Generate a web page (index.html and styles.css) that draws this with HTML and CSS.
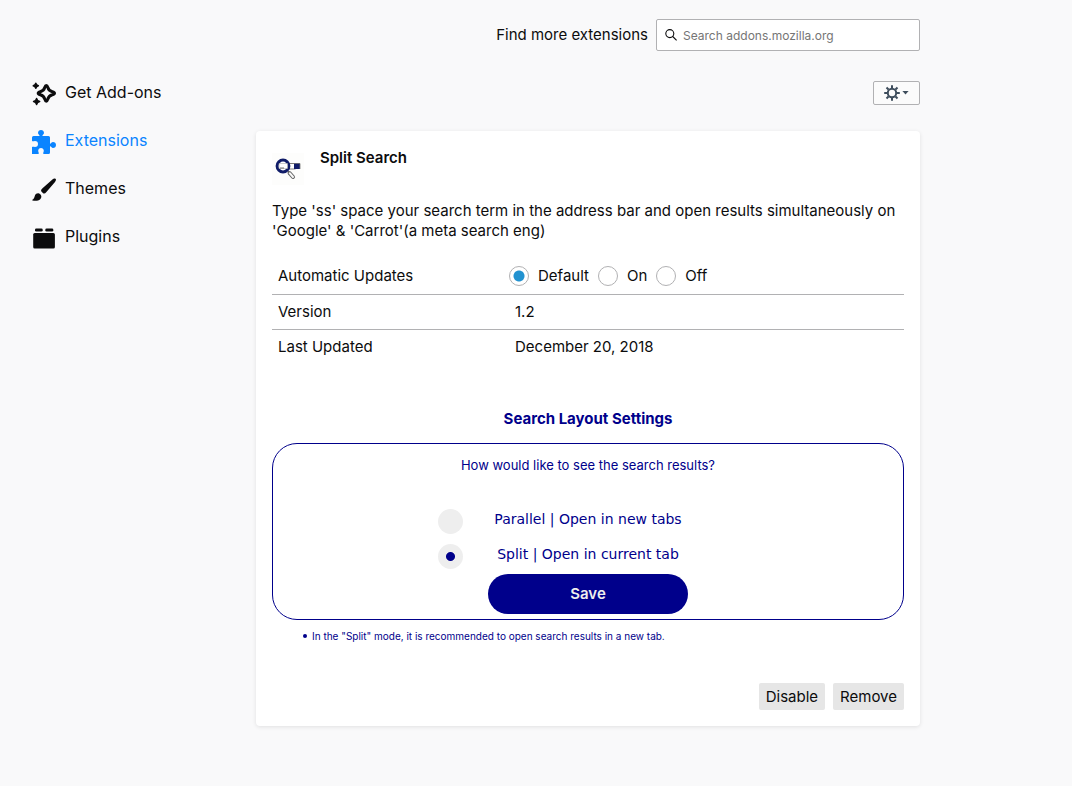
FILE: index.html
```html
<!DOCTYPE html>
<html lang="en">
<head>
<meta charset="utf-8">
<meta name="viewport" content="width=device-width, initial-scale=1">
<title>Add-ons Manager</title>
<link rel="stylesheet" href="styles.css">
</head>
<body>
<div class="page">
  <nav class="sidebar">
    <a class="category" href="#discover">
      <svg class="category-icon" viewBox="0 0 24 24" aria-hidden="true">
        <path d="M14.300 3.400C15.200 3.400 15.400 4 15.700 5.100C16.400 7.700 17.700 9 20.300 9.700C21.800 10.100 22.500 10.400 22.500 11.200S21.800 12.300 20.300 12.700C17.700 13.400 16.400 14.700 15.700 17.300C15.400 18.400 15.200 19.200 14.300 19.200S13.200 18.400 12.900 17.300C12.200 14.700 10.900 13.400 8.300 12.700C6.800 12.300 6.200 12 6.200 11.200S6.800 10.100 8.300 9.700C10.900 9 12.200 7.700 12.900 5.100C13.200 4 13.400 3.400 14.300 3.400Z" fill="none" stroke="currentColor" stroke-width="3" stroke-linejoin="round"/>
        <path d="M3.800 1.200Q4.300 3.300 6.400 3.800Q4.300 4.300 3.800 6.400Q3.300 4.300 1.200 3.800Q3.300 3.300 3.800 1.200ZM4.600 16.500Q5.200 19 7.700 19.500Q5.200 20 4.600 22.500Q4 20 1.500 19.500Q4 19 4.600 16.500Z" fill="currentColor" stroke="currentColor" stroke-width="1.400" stroke-linejoin="round"/>
      </svg>
      <span>Get Add-ons</span>
    </a>
    <a class="category category-selected" href="#extensions">
      <svg class="category-icon" viewBox="0 0 24 24" aria-hidden="true">
        <path fill="currentColor" d="M0 24V17C1 16.500 1.700 17 3 17C5 17 6 16 6 14S5 11 3 11C1.700 11 1 11.600 0 11.100V7.500Q0 6 1.500 6H7.500C8.200 5.200 6 4.500 6 2.900C6 1.100 7.300 0 9 0S12 1.100 12 2.900C12 4.500 9.800 5.200 10.500 6H16.500Q18 6 18 7.500V13.500C18.800 14.200 19.300 12 21 12C22.800 12 24 13.200 24 15S22.800 18 21 18C19.300 18 18.800 15.800 18 16.500V22.500Q18 24 16.500 24H11.500C10.700 22.800 11.800 22.300 11.800 20.800C11.800 19.100 10.600 18 9 18S6.200 19.100 6.200 20.800C6.200 22.300 7.300 22.800 6.500 24Z"/>
      </svg>
      <span>Extensions</span>
    </a>
    <a class="category" href="#themes">
      <svg class="category-icon" viewBox="0 0 24 24" aria-hidden="true">
        <path fill="currentColor" d="M23.500 .8C22.600 0 21.400 .5 20.700 1.200L10.500 10.300C9 11.700 8.800 12.600 9.400 13.500L11.100 15.200C12.100 16 13.200 15.500 14.200 14.300L23 3.900C23.800 2.900 24.500 1.700 23.500 .8ZM7 15.400C4.500 15 3.200 16.500 2.700 18.200C2.200 20 1.500 21.100 .4 21.700C.1 21.900 .2 22.300 .5 22.400C3 23.300 6.500 22.900 8.200 21.300C9.500 20 9.700 18.200 8.800 16.900C8.400 16.100 7.800 15.600 7 15.400Z"/>
      </svg>
      <span>Themes</span>
    </a>
    <a class="category" href="#plugins">
      <svg class="category-icon" viewBox="0 0 24 24" aria-hidden="true">
        <g fill="currentColor"><rect x="1.200" y="7" width="21.700" height="15.500" rx="1.500"/><rect x="3" y="2.500" width="7.700" height="3" rx="1.300"/><rect x="13.300" y="2.500" width="8" height="3" rx="1.300"/></g>
      </svg>
      <span>Plugins</span>
    </a>
  </nav>
  <main class="main">
    <form class="search">
      <label for="addon-search">Find more extensions</label>
      <div class="search-box">
        <svg class="search-icon" viewBox="0 0 12 12" aria-hidden="true"><g fill="none" stroke="#0c0c0d" stroke-width="1.100"><circle cx="4.800" cy="4.600" r="4"/><path d="M7.700 7.500L11.600 11.400"/></g></svg>
        <input id="addon-search" class="search-input" type="text" placeholder="Search addons.mozilla.org">
      </div>
    </form>
    <div class="toolbar">
      <button class="tools" type="button" aria-label="Tools for all add-ons">
        <svg class="gear" viewBox="0 0 16 16" aria-hidden="true"><g fill="none" stroke="#3e4d5c"><circle cx="8" cy="8" r="4.200" stroke-width="2"/><path stroke-width="2" d="M8 .2V3M8 13V15.800M.2 8H3M13 8H15.800M2.500 2.500L4.500 4.500M11.500 11.500L13.500 13.500M2.500 13.500L4.500 11.500M11.500 4.500L13.500 2.500"/></g></svg>
        <svg class="caret" viewBox="0 0 7 4" aria-hidden="true"><path fill="#3e4d5c" d="M.4 0H6.600L3.500 3.600Z"/></svg>
      </button>
    </div>
    <article class="card">
      <header class="card-header">
        <svg class="addon-icon" viewBox="0 0 32 32" aria-hidden="true">
          <rect width="32" height="32" fill="#fdfdfc"/>
          <rect x="17" y="10.500" width="6" height="5.500" fill="#fff" stroke="#858585"/>
          <path fill="#101c68" d="M22 10H28V16H22Z"/><path d="M28 10.500V16M18 10.500H28" stroke="#777" stroke-width=".8"/>
          <circle cx="11" cy="13" r="5.900" fill="#fff" stroke="#101c68" stroke-width="3"/>
          <path d="M7 10.500H15.500V15.500H7Z" fill="#fff" stroke="#aaa" stroke-width=".6"/><path d="M8 15H12" stroke="#555" stroke-width=".8"/>
          <path d="M16 18L18 20" stroke="#555"/><path d="M17.500 20L21 24" stroke="#666" stroke-width="4" stroke-linecap="round"/><path d="M17.700 20.200L21 24" stroke="#f8f8f8" stroke-width="2" stroke-linecap="round"/>
        </svg>
        <h1 class="addon-name">Split Search</h1>
      </header>
      <p class="description">Type 'ss' space your search term in the address bar and open results simultaneously on 'Google' &amp; 'Carrot'(a meta search eng)</p>
      <table class="details">
        <tr>
          <th scope="row" id="updates-label">Automatic Updates</th>
          <td class="updates-cell">
            <div class="updates" role="radiogroup" aria-labelledby="updates-label">
              <label class="update-option"><input class="radio" type="radio" name="updates" checked>Default</label>
              <label class="update-option"><input class="radio" type="radio" name="updates">On</label>
              <label class="update-option"><input class="radio" type="radio" name="updates">Off</label>
            </div>
          </td>
        </tr>
        <tr><th scope="row">Version</th><td>1.2</td></tr>
        <tr><th scope="row">Last Updated</th><td>December 20, 2018</td></tr>
      </table>
      <form class="settings">
        <h2 class="settings-title">Search Layout Settings</h2>
        <div class="settings-box">
          <p class="question">How would like to see the search results?</p>
          <label class="layout-option"><input class="layout-radio" type="radio" name="layout"><span class="layout-text">Parallel | Open in new tabs</span></label>
          <label class="layout-option"><input class="layout-radio" type="radio" name="layout" checked><span class="layout-text">Split | Open in current tab</span></label>
          <button class="save" type="button">Save</button>
        </div>
        <ul class="notes"><li class="note">In the "Split" mode, it is recommended to open search results in a new tab.</li></ul>
      </form>
      <footer class="actions">
        <button class="action" type="button">Disable</button>
        <button class="action" type="button">Remove</button>
      </footer>
    </article>
  </main>
</div>
</body>
</html>
```

FILE: styles.css
```css
* {
  box-sizing: border-box;
}

body {
  margin: 0;
  background: #f9f9fa;
  color: #0c0c0d;
  font: 15px/20px Inter, "Liberation Sans", sans-serif;
}

h1, h2, p, ul {
  margin: 0;
}

button, input {
  font: inherit;
  color: inherit;
}

.page {
  display: flex;
  min-height: 100vh;
}

.sidebar {
  display: flex;
  flex-direction: column;
  flex: 0 0 256px;
  padding: 70px 0 0 32px;
}

.category {
  display: flex;
  align-items: flex-start;
  gap: 9px;
  height: 48px;
  padding-top: 12px;
  color: inherit;
  font-size: 16px;
  text-decoration: none;
}

.category-selected {
  color: #0a84ff;
}

.category-icon {
  width: 24px;
  height: 24px;
}

.main {
  flex: 1;
  max-width: 664px;
  padding: 19px 0 60px;
}

.search {
  display: flex;
  justify-content: flex-end;
  align-items: center;
  gap: 8px;
}

.search-box {
  display: flex;
  align-items: center;
  gap: 6px;
  width: 264px;
  height: 32px;
  padding: 0 8px;
  border: 1px solid #b1b1b3;
  border-radius: 2px;
  background: #fff;
}

.search-icon {
  flex: none;
  width: 12px;
  height: 12px;
}

.search-input {
  flex: 1;
  min-width: 0;
  padding: 2px 0 0;
  border: 0;
  outline: 0;
  background: transparent;
  font-size: 12px;
}

.search-input::placeholder {
  color: #757575;
  opacity: 1;
}

.toolbar {
  display: flex;
  justify-content: flex-end;
  margin: 30px 0 26px;
}

.tools {
  display: flex;
  align-items: center;
  justify-content: center;
  gap: 2px;
  width: 47px;
  height: 24px;
  padding: 0;
  border: 1px solid #b1b1b3;
  border-radius: 2px;
  background: #fbfbfb;
}

.gear {
  width: 16px;
  height: 16px;
}

.caret {
  width: 7px;
  height: 4px;
}

.card {
  padding: 16px;
  border-radius: 4px;
  background: #fff;
  box-shadow: 0 1px 4px rgba(12, 12, 13, 0.1);
}

.card-header {
  display: flex;
  align-items: flex-end;
  gap: 16px;
  height: 38px;
}

.addon-icon {
  width: 32px;
  height: 32px;
}

.addon-name {
  align-self: flex-start;
  font-size: 15px;
  font-weight: 600;
  line-height: 22px;
}

.description {
  margin: 16px 0;
}

.details {
  width: 100%;
  border-collapse: collapse;
  table-layout: fixed;
}

.details th,
.details td {
  height: 35px;
  padding: 0 6px;
  text-align: left;
  font-weight: 400;
}

.details th {
  width: 37.5%;
}

.details tr + tr {
  border-top: 1px solid #b1b1b3;
}

.details tr:first-child th {
  padding-top: 2px;
}

.details .updates-cell {
  height: 37px;
  padding: 2px 0 0;
}

.updates {
  display: flex;
  gap: 9px;
}

.update-option {
  display: flex;
  align-items: center;
  gap: 9px;
}

.radio {
  appearance: none;
  width: 20px;
  height: 20px;
  margin: 0;
  border: 1px solid #b1b1b3;
  border-radius: 50%;
  background: #fff;
}

.radio:checked {
  background: radial-gradient(circle, #2292d0 5px, #fff 6px);
}

.settings {
  margin-top: 45px;
  color: #00008b;
}

.settings-title {
  font-size: 15px;
  font-weight: 700;
  line-height: 20px;
  text-align: center;
}

.settings-box {
  display: flex;
  flex-direction: column;
  align-items: center;
  margin-top: 14px;
  padding: 11px 0 5px;
  border: 1px solid #00008b;
  border-radius: 25px;
}

.question {
  margin-bottom: 32px;
  font-size: 13px;
}

.layout-option {
  display: grid;
  grid-template-columns: 25px 200px 25px;
  column-gap: 25px;
  align-items: start;
  height: 25px;
}

.layout-option + .layout-option {
  margin-top: 10px;
}

.layout-radio {
  appearance: none;
  width: 25px;
  height: 25px;
  margin: 2px 0 0;
  border-radius: 50%;
  background: #eee;
}

.layout-radio:checked {
  background: radial-gradient(circle, #00008b 4px, #eee 5px);
}

.layout-text {
  font-family: "DejaVu Sans", sans-serif;
  font-size: 14px;
  line-height: 24px;
  text-align: center;
  white-space: nowrap;
}

.save {
  width: 200px;
  height: 40px;
  margin-top: 7px;
  border: 0;
  border-radius: 20px;
  background: #00008b;
  color: #eee;
  font-weight: 600;
}

.notes {
  margin-top: 6px;
  padding-left: 31px;
  font-size: 10px;
  list-style: none;
}

.note {
  display: flex;
  align-items: center;
  gap: 5px;
}

.note::before {
  content: "";
  width: 4px;
  height: 4px;
  border-radius: 50%;
  background: currentColor;
}

.actions {
  display: flex;
  justify-content: flex-end;
  gap: 8px;
  margin-top: 37px;
}

.action {
  height: 27px;
  padding: 0 7px;
  border: 0;
  border-radius: 2px;
  background: #e6e6e6;
}
```
